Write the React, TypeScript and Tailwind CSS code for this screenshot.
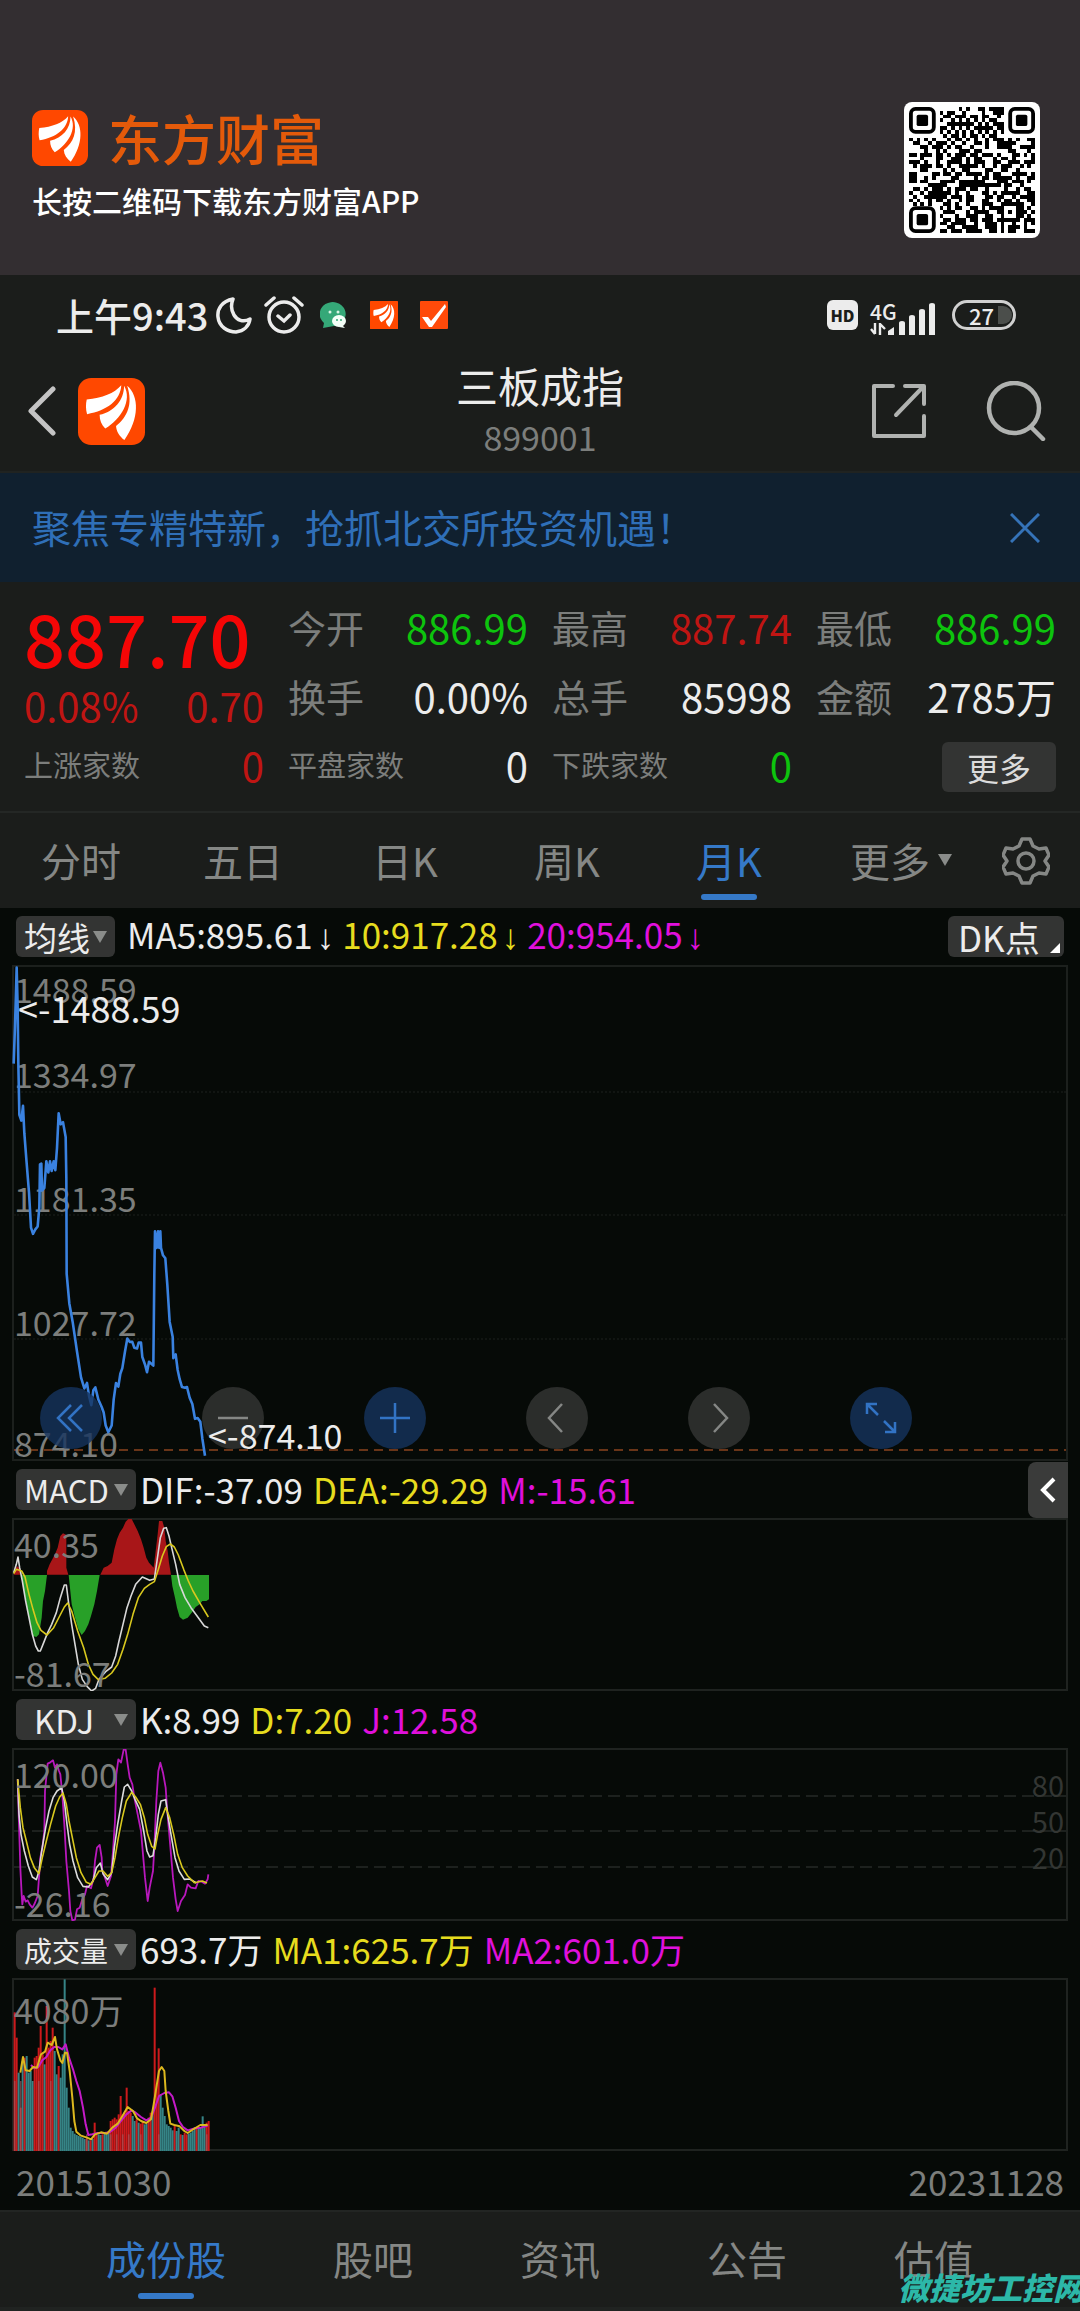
import React, { useState } from 'react';
import clsx from 'clsx';

const QR_ROWS = [
  '111111100000010100110111101111111',
  '100000101011001000010011101000001',
  '101110100110111011011001001011101',
  '101110101001010101010110001011101',
  '101110100011111110101011101011101',
  '100000101101010101111101101000001',
  '111111101010101010101010101111111',
  '000000000101101011010110000000000',
  '101010100010110101001011101010011',
  '011001011101001001101001111100001',
  '000110111010110010001001111001111',
  '000010010100011101100000001100010',
  '110111011010111011011101000110101',
  '000100011001110101100010110100001',
  '111010010011110101110011001110111',
  '010111011010011111010010111001010',
  '000110000101001100001100110010000',
  '110000110110110111101011000111101',
  '110010100001100001011011111010011',
  '110110001111011111110001110111010',
  '000001111100011111111111011001000',
  '011010111010111011001000010010110',
  '100101111110100100011010111110011',
  '010011111101110110001101100101111',
  '101001011010010110011001011010011',
  '010101000110100100011100111111001',
  '000000001010110011010111100011010',
  '111111100111000101111001101011101',
  '100000101000100111001100100011010',
  '101110100110111011011101111110111',
  '101110101101111001001110100100101',
  '101110100011001111001110101110100',
  '111111101101110111100110101100111',
];

const inFinder = (x: number, y: number) => (x < 7 && y < 7) || (x > 25 && y < 7) || (x < 7 && y > 25);

const QrCode: React.FC = () => (
  <svg viewBox="0 0 33 33" className="size-full" shapeRendering="crispEdges" role="img">
    {QR_ROWS.map((row, y) =>
      row.split('').map((bit, x) =>
        bit === '1' && !inFinder(x, y) ? <rect key={`${x}-${y}`} x={x} y={y} width="1" height="1" fill="#000" /> : null,
      ),
    )}
    {[
      [0, 0],
      [26, 0],
      [0, 26],
    ].map(([x, y]) => (
      <g key={`${x}-${y}`} shapeRendering="auto">
        <rect x={x + 0.5} y={y + 0.5} width="6" height="6" rx="1.2" fill="none" stroke="#000" />
        <rect x={x + 2} y={y + 2} width="3" height="3" rx="0.5" fill="#000" />
      </g>
    ))}
  </svg>
);

const Logo: React.FC<{ className?: string; square?: boolean }> = ({ className, square }) => (
  <svg viewBox="0 0 192 200" preserveAspectRatio="none" className={className}>
    <rect width="192" height="200" rx={square ? 4 : 38} fill="#ff4800" />
    <path fill="#fff" d="M25 64C70 60 104 46 124 22C122 66 84 98 26 108C22 94 22 78 25 64Z" />
    <path fill="#fff" d="M62 110C104 100 132 66 132 23C156 66 124 122 78 151C67 140 62 126 62 110Z" />
    <path fill="#fff" d="M141 23C176 54 176 122 133 185C119 174 110 160 109 143C142 116 158 78 141 23Z" />
  </svg>
);

const Caret: React.FC<{ className?: string }> = ({ className }) => (
  <svg viewBox="0 0 14 12" className={clsx('h-3 w-3.5', className)}>
    <path d="M0 0H14L7 12Z" fill="#8a8c8a" />
  </svg>
);

const DownloadHeader: React.FC = () => (
  <header className="flex h-[275px] items-center justify-between bg-[#332e31] pr-10 pl-8">
    <div className="pt-14">
      <div className="flex items-center gap-5">
        <Logo className="size-14" />
        <h1 className="text-[54px] leading-[56px] font-medium text-[#e45a0a]">东方财富</h1>
      </div>
      <p className="mt-3 text-[30px] leading-[44px] font-medium text-white">长按二维码下载东方财富APP</p>
    </div>
    <div className="mt-16 size-[136px] rounded-lg bg-white p-[5px]">
      <QrCode />
    </div>
  </header>
);

const StatusBar: React.FC = () => (
  <div className="flex h-20 items-center pr-16 pl-14 text-[#ececec]">
    <span className="text-[38px] leading-[40px] font-medium">上午9:43</span>
    <svg viewBox="0 0 36 38" className="ml-2 h-[38px] w-9" fill="none" stroke="currentColor" strokeWidth="3.5" strokeLinejoin="round">
      <path d="M17 3C6 5 1 13 2 21C3 31 12 36 20 36C28 35 33 30 34 23C27 27 21 24 18 19C15 14 15 8 17 3Z" />
    </svg>
    <svg viewBox="0 0 40 38" className="ml-3 h-[38px] w-10" fill="none" stroke="currentColor" strokeWidth="3.5" strokeLinecap="round">
      <circle cx="20" cy="21" r="15" />
      <path d="M2 9L10 2M38 9L30 2M14 20L20 25L26 19" />
    </svg>
    <svg viewBox="0 0 28 28" className="ml-4 size-7">
      <path d="M3 27L4 22A13 12 0 1 1 14 25Z" fill="#35a878" />
      <circle cx="10" cy="11" r="1.5" fill="#d9f5e6" />
      <circle cx="18" cy="11" r="1.5" fill="#d9f5e6" />
      <ellipse cx="19" cy="20" rx="7" ry="6" fill="#f4fff8" />
      <path d="M22 24L25 27L19 26Z" fill="#f4fff8" />
      <circle cx="17" cy="19" r="1" fill="#35a878" />
      <circle cx="21" cy="19" r="1" fill="#35a878" />
    </svg>
    <Logo square className="ml-[22px] size-7" />
    <svg viewBox="0 0 28 28" className="ml-[22px] size-7">
      <rect width="28" height="28" rx="1" fill="#ff4a0a" />
      <path d="M2 16L8 16L11 20L25 3L26 6L12 26L9 26Z" fill="#fff" />
    </svg>
    <span className="ml-auto flex h-[30px] w-[31px] items-center justify-center rounded-md bg-[#ececec] text-[16px] leading-none font-black text-[#1b1d1b]">
      HD
    </span>
    <div className="mr-4 ml-3 grid h-10 w-[66px] grid-cols-[18px_48px] items-end">
      <div className="flex flex-col">
        <span className="text-[21px] leading-[24px] font-medium">4G</span>
        <svg viewBox="0 0 16 12" className="h-3 w-4" fill="none" stroke="currentColor" strokeWidth="2.4">
          <path d="M5 0V11M1 6L5 11M10 12V1L15 6" />
        </svg>
      </div>
      <svg viewBox="0 0 48 32" className="h-8 w-12" fill="currentColor">
        <path d="M0 32V28L6 24V32ZM11 32V20Q11 18 14 18Q17 18 17 20V32ZM21 32V14Q21 12 24 12Q27 12 27 14V32ZM31 32V8Q31 6 34 6Q37 6 37 8V32ZM41 32V2Q41 0 44 0Q47 0 47 2V32Z" />
      </svg>
    </div>
    <div className="flex h-[30px] w-16 items-center overflow-hidden rounded-full border-[3px] border-[#d0d0d0]">
      <span className="ml-3.5 text-[22px] leading-[24px] font-medium">27</span>
      <span className="ml-1 h-[18px] w-3.5 rounded-r-full bg-[#4b4e4b]" />
    </div>
  </div>
);

const AppBar: React.FC = () => (
  <div className="grid h-[118px] grid-cols-3 items-center border-b-2 border-[#202321] px-7 pb-1">
    <div className="flex items-center gap-[22px]">
      <button aria-label="返回">
        <svg viewBox="0 0 28 50" className="h-[50px] w-7" fill="none" stroke="#c4c4c4" strokeWidth="5" strokeLinecap="round" strokeLinejoin="round">
          <path d="M25 3L3 25L25 47" />
        </svg>
      </button>
      <Logo className="h-[67px] w-[67px]" />
    </div>
    <div className="pb-1 text-center">
      <h2 className="text-[42px] leading-[56px] text-[#ececec]">三板成指</h2>
      <p className="text-[34px] leading-[48px] text-[#7c7e7c]">899001</p>
    </div>
    <div className="flex items-center justify-end gap-[60px] pr-1.5">
      <button aria-label="分享">
        <svg viewBox="0 0 54 54" className="size-[54px]" fill="none" stroke="#b0b2b0" strokeWidth="4" strokeLinecap="round" strokeLinejoin="round">
          <path d="M21 2H2V52H52V32M33 2H52V20M50 4L24 31" />
        </svg>
      </button>
      <button aria-label="搜索">
        <svg viewBox="0 0 60 60" className="size-[60px]" fill="none" stroke="#b0b2b0" strokeWidth="4.5" strokeLinecap="round">
          <circle cx="28" cy="27" r="25" />
          <path d="M45 46L57 58" />
        </svg>
      </button>
    </div>
  </div>
);

const Banner: React.FC<{ onClose: () => void }> = ({ onClose }) => (
  <div className="flex h-[109px] items-center justify-between bg-[#10202f] px-8">
    <a href="#topic" className="pb-1 text-[39px] leading-[56px] text-[#2f6fb8]">
      聚焦专精特新，抢抓北交所投资机遇！
    </a>
    <button aria-label="关闭" onClick={onClose} className="mr-2">
      <svg viewBox="0 0 30 30" className="size-[30px]" fill="none" stroke="#3573b8" strokeWidth="3">
        <path d="M1 1L29 29M29 1L1 29" />
      </svg>
    </button>
  </div>
);

interface StatProps {
  label: string;
  value: string;
  color: string;
  small?: boolean;
}

const Stat: React.FC<StatProps> = ({ label, value, color, small }) => (
  <div className="flex items-center justify-between pb-1 whitespace-nowrap">
    <span className={clsx('text-[#7c7e7c]', small ? 'text-[29px]' : 'text-[38px]')}>{label}</span>
    <span className={clsx('text-[40px]', color)}>{value}</span>
  </div>
);

const QuotePanel: React.FC = () => (
  <section className="grid h-[231px] grid-cols-4 grid-rows-[69px_69px_69px] gap-x-6 border-b-2 border-[#242725] px-6 pt-3">
    <div className="row-span-2 flex flex-col">
      <span className="text-[72px] leading-[86px] font-medium text-[#f50606]">887.70</span>
      <span className="flex justify-between text-[40px] leading-[50px] text-[#c01513]">
        <span>0.08%</span>
        <span>0.70</span>
      </span>
    </div>
    <Stat label="今开" value="886.99" color="text-[#0dc40d]" />
    <Stat label="最高" value="887.74" color="text-[#c01513]" />
    <Stat label="最低" value="886.99" color="text-[#0dc40d]" />
    <Stat label="换手" value="0.00%" color="text-[#ececec]" />
    <Stat label="总手" value="85998" color="text-[#ececec]" />
    <Stat label="金额" value="2785万" color="text-[#ececec]" />
    <Stat small label="上涨家数" value="0" color="text-[#c01513]" />
    <Stat small label="平盘家数" value="0" color="text-[#ececec]" />
    <Stat small label="下跌家数" value="0" color="text-[#0dc40d]" />
    <button className="h-[50px] w-[114px] self-center justify-self-end rounded-md bg-[#333433] text-[32px] leading-[48px] text-[#dcdcdc]">
      更多
    </button>
  </section>
);

const PERIODS = ['分时', '五日', '日K', '周K', '月K', '更多'];

const PeriodTabs: React.FC = () => {
  const [active, setActive] = useState('月K');
  return (
    <nav className="grid h-[95px] grid-cols-[repeat(6,3fr)_2fr]">
      {PERIODS.map((p) => (
        <button
          key={p}
          onClick={() => setActive(p)}
          className={clsx(
            'relative flex items-center justify-center gap-2 pb-0.5 text-[40px]',
            p === active ? 'text-[#3579c8]' : 'text-[#858785]',
            p === '更多' && 'pl-5',
          )}
        >
          {p}
          {p === '更多' && <Caret />}
          {p === active && <span className="absolute bottom-2 h-1.5 w-14 rounded-sm bg-[#3579c8]" />}
        </button>
      ))}
      <button aria-label="设置" className="flex items-center justify-center">
        <svg viewBox="0 0 48 50" className="h-[50px] w-12" fill="none" stroke="#858785" strokeWidth="3.5" strokeLinejoin="round">
          <path d="M20 3H28L31 10L37 13L44 12L47 19L43 25L47 31L44 38L37 37L31 40L28 47H20L17 40L11 37L4 38L1 31L5 25L1 19L4 12L11 13L17 10Z" />
          <circle cx="24" cy="25" r="8" />
        </svg>
      </button>
    </nav>
  );
};

const Picker: React.FC<{ label: string; options: string[]; className: string }> = ({ label, options, className }) => (
  <span className="relative flex items-center">
    <select
      aria-label={label}
      defaultValue={options[0]}
      className={clsx('h-[41px] appearance-none rounded-md bg-[#333433] leading-[40px] text-[#ececec] outline-none', className)}
    >
      {options.map((o) => (
        <option key={o}>{o}</option>
      ))}
    </select>
    <Caret className="pointer-events-none absolute right-2" />
  </span>
);

interface IndicatorRowProps {
  picker: React.ReactNode;
  values: string[];
  falling?: boolean;
  children?: React.ReactNode;
}

const IndicatorRow: React.FC<IndicatorRowProps> = ({ picker, values, falling, children }) => (
  <div className="flex h-[57px] items-center pl-4 text-[35px] leading-[40px] whitespace-nowrap">
    {picker}
    <span className={clsx('flex pb-0.5', falling ? 'ml-3 gap-2' : 'ml-1 gap-2.5')}>
      {values.map((v, i) => (
        <span key={v} className={['text-[#ececec]', 'text-[#e6dc1e]', 'text-[#e010dc]'][i]}>
          {v}
          {falling && <span className="ml-1 font-['Liberation_Sans']">↓</span>}
        </span>
      ))}
    </span>
    {children}
  </div>
);

const Line: React.FC<{ points: string; color: string; width?: number }> = ({ points, color, width = 1.6 }) => (
  <polyline
    points={points}
    fill="none"
    stroke={color}
    strokeWidth={width}
    strokeLinejoin="round"
    vectorEffect="non-scaling-stroke"
  />
);

const PRICE_LINE =
  '38,332 42,230 47,72 50,180 52,330 55,470 61,486 66,446 70,520 76,590 84,680 90,775 96,792 103,780 110,772 115,720 117,604 121,602 123,675 130,668 136,596 142,626 147,596 152,622 158,596 163,620 168,560 173,466 179,496 186,490 194,530 196,640 197,900 205,980 215,1030 228,1110 240,1180 250,1210 258,1195 264,1230 271,1255 277,1215 283,1207 292,1240 302,1260 308,1275 314,1310 322,1328 332,1310 338,1240 345,1195 352,1205 358,1170 364,1155 372,1110 379,1075 386,1084 394,1084 400,1100 408,1102 413,1086 420,1086 424,1125 432,1145 438,1166 444,1138 457,1148 460,900 462,785 467,830 471,785 475,830 478,785 480,830 486,850 493,858 499,930 506,1030 515,1070 517,1128 524,1118 530,1160 536,1185 543,1206 552,1208 558,1206 566,1235 574,1252 582,1292 590,1290 598,1300 604,1345 612,1392';

const CircleButton: React.FC<{ label: string; blue?: boolean; d: string }> = ({ label, blue, d }) => (
  <button
    aria-label={label}
    className={clsx(
      'flex size-[62px] items-center justify-center rounded-full',
      blue ? 'bg-[#15335e]/80 text-[#3273c4]' : 'bg-[#343634]/80 text-[#858785]',
    )}
  >
    <svg viewBox="0 0 32 32" className="size-8" fill="none" stroke="currentColor" strokeWidth="2.5">
      <path d={d} />
    </svg>
  </button>
);

const PriceChart: React.FC = () => (
  <div className="relative mx-3 h-[496px] border-2 border-[#1c201d] text-[34px] leading-[40px] text-[#7c7e7c]">
    <div className="absolute inset-x-0 top-[124px] border-t-2 border-dotted border-[#111512]" />
    <div className="absolute inset-x-0 top-[247px] border-t-2 border-dotted border-[#111512]" />
    <div className="absolute inset-x-0 top-[371px] border-t-2 border-dotted border-[#111512]" />
    <svg className="absolute inset-x-0 bottom-2 h-0.5 w-full">
      <line x1="0" y1="1" x2="100%" y2="1" stroke="#6a3518" strokeWidth="2" strokeDasharray="9 6" />
    </svg>
    <span className="absolute top-0.5 left-0">1488.59</span>
    <span className="absolute top-[87px] left-0">1334.97</span>
    <span className="absolute top-[211px] left-0">1181.35</span>
    <span className="absolute top-[335px] left-0">1027.72</span>
    <span className="absolute -bottom-1 left-0">874.10</span>
    <svg viewBox="36 68 600 1338" preserveAspectRatio="none" className="absolute -top-px -left-px h-[495px] w-[200px] overflow-visible">
      <Line points={PRICE_LINE} color="#3a82e0" width={2.6} />
    </svg>
    <div className="absolute bottom-2.5 left-[26px] flex gap-[100px]">
      <CircleButton blue label="最左" d="M16 3L3 16L16 29M27 3L14 16L27 29" />
      <CircleButton label="缩小" d="M1 16H31" />
      <CircleButton blue label="放大" d="M1 16H31M16 1V31" />
      <CircleButton label="左移" d="M21 2L8 16L21 30" />
      <CircleButton label="右移" d="M11 2L24 16L11 30" />
      <CircleButton blue label="全屏" d="M2 12V2H12M2 2L13 13M30 20V30H20M30 30L19 19" />
    </div>
    <span className="absolute top-5 left-1 text-[36px] text-[#ececec]">&lt;-1488.59</span>
    <span className="absolute bottom-1 left-[194px] text-[#ececec]">&lt;-874.10</span>
  </div>
);

interface SubChartProps {
  high: string;
  low?: string;
  viewBox: string;
  children: React.ReactNode;
  grid?: React.ReactNode;
}

const SubChart: React.FC<SubChartProps> = ({ high, low, viewBox, children, grid }) => (
  <div className="relative mx-3 h-[173px] border-2 border-[#1f2320] text-[34px] leading-[40px] text-[#7c7e7c]">
    {grid}
    <svg viewBox={viewBox} className="absolute -top-px -left-px h-[172px] w-[200px]">
      {children}
    </svg>
    <span className={clsx('absolute left-0', low ? 'top-1' : 'top-2.5')}>{high}</span>
    {low && <span className="absolute -bottom-1 left-0">{low}</span>}
  </div>
);

const MacdChart: React.FC = () => (
  <SubChart high="40.35" low="-81.67" viewBox="36 54 600 516">
    <path
      fill="#a81618"
      d="M38 221L44 200L50 196L58 205V221ZM138 221V210L146 190L154 175L162 160L170 140L178 105L186 97L196 102V200L202 221ZM298 221L308 200L320 195L332 185L340 145L348 115L356 95L366 80L374 62L382 54H392L400 70L410 90L420 115L428 140L436 170L444 185L458 200L464 150L470 100L474 60H484L490 80L494 120L500 150L504 185L510 221Z"
    />
    <path
      fill="#28a028"
      d="M60 222H138L132 270L126 300L122 350L114 400L106 408L96 405L88 370L80 330L70 270ZM203 222H296L288 270L280 310L270 345L262 370L252 390L242 402L232 385L222 350L212 310ZM510 222H624V295L616 300H604L596 310L584 318L572 335L560 350L546 356L536 348L528 320L522 290L514 255Z"
    />
    <Line color="#d8d8d8" points="38,215 46,190 51,168 56,200 64,240 74,300 84,350 94,400 104,435 112,450 118,450 126,430 140,395 152,370 166,335 178,290 190,252 196,252 202,300 212,370 222,430 232,490 244,535 258,556 272,570 284,562 294,535 314,512 332,498 344,465 354,420 366,370 378,320 390,285 404,250 424,228 446,238 460,234 468,180 478,110 488,82 496,80 504,105 512,140 524,190 536,250 552,290 570,320 592,350 610,375 622,380" />
    <Line color="#d8c81e" points="38,218 46,205 62,210 72,228 84,280 96,325 108,365 120,388 138,402 158,380 176,345 190,318 200,306 212,330 230,390 248,440 262,490 276,520 292,536 312,532 332,516 350,490 366,445 380,400 396,340 412,290 430,262 446,250 460,242 472,205 484,165 496,137 508,129 520,138 532,162 548,205 562,240 576,270 596,305 622,348" />
  </SubChart>
);

const KdjChart: React.FC = () => (
  <SubChart
    high="120.00"
    low="-26.16"
    viewBox="36 174 600 516"
    grid={
      <>
        <svg className="absolute inset-0 size-full" stroke="#1d211e" strokeWidth="2" strokeDasharray="12 6">
          <line x1="0" y1="46" x2="100%" y2="46" />
          <line x1="0" y1="81" x2="100%" y2="81" />
          <line x1="0" y1="117" x2="100%" y2="117" />
        </svg>
        <div className="absolute top-4 right-0.5 flex flex-col text-[29px] leading-[36px] text-[#333633]">
          <span>80</span>
          <span>50</span>
          <span>20</span>
        </div>
      </>
    }
  >
    <Line color="#b818bc" width={1.8} points="50,265 54,400 58,530 62,610 64,640 68,615 74,632 80,628 86,640 94,650 100,640 110,615 114,560 118,500 124,470 130,420 132,300 140,218 148,214 156,208 162,230 168,220 174,240 178,250 184,310 190,400 196,510 204,600 208,660 214,688 222,686 228,655 236,650 244,625 252,610 258,585 270,592 278,560 282,510 288,470 296,462 302,500 304,540 312,560 320,585 330,555 336,480 342,390 346,250 352,205 360,215 368,176 374,176 380,220 386,260 394,280 400,320 410,370 420,420 426,490 432,560 440,630 446,590 456,540 460,470 466,330 472,240 478,215 486,245 494,290 498,350 504,420 510,490 516,560 524,625 530,660 540,630 552,612 560,580 570,590 584,592 592,570 602,572 612,578 620,565 622,550" />
    <Line color="#dcdcdc" points="50,265 54,370 60,430 70,480 82,525 94,558 106,566 114,540 122,480 134,410 144,360 156,320 168,300 182,290 190,330 198,400 206,460 216,510 230,560 246,586 262,588 276,570 286,530 298,516 306,548 320,566 332,545 340,470 350,400 362,330 370,288 380,280 392,300 402,325 416,355 428,420 438,480 446,498 456,494 464,440 472,370 480,330 494,326 500,370 510,430 522,500 534,540 550,565 566,564 586,576" />
    <Line color="#d8c81e" points="50,265 58,350 66,410 76,450 88,500 100,530 114,548 124,500 136,450 150,395 164,345 176,318 186,306 196,340 204,390 214,440 226,500 240,545 256,574 270,580 282,560 294,540 306,540 320,556 332,545 342,500 352,440 364,380 376,330 392,304 404,318 418,340 430,380 440,430 452,466 462,474 470,430 480,385 494,350 506,380 518,430 530,490 544,530 560,555 580,575 604,570 618,576" />
  </SubChart>
);

// Bar heights of the volume pane, one per month; r = up, g = down
const VOLUME =
  'r416 r340 g235 r130 g270 r280 g285 g235 g240 g210 r280 r285 r310 r375 r290 g260 r435 r310 r330 r370 g300 g230 r255 g220 g290 g515 g190 g130 g70 g60 g52 g48 g45 g42 g40 g36 r36 g32 r32 g36 r85 r50 g50 g48 r50 g52 g50 g55 r90 r95 r100 r95 r110 r165 r110 r115 r190 r120 r115 g105 g90 r95 g85 r82 r90 g80 g82 r100 r115 g120 r490 r200 r308 g170 g130 g105 g80 g75 g70 g62 r75 g60 g70 r50 g48 r55 r50 g52 g55 g60 g70 r68 g68 g70 g104 g75 r85 r90'
    .split(' ')
    .map((v) => ({ up: v[0] === 'r', h: Number(v.slice(1)) }));

const VolumeChart: React.FC = () => (
  <SubChart high="4080万" viewBox="36 174 600 516">
    {VOLUME.map(({ up, h }, i) => (
      <rect key={i} x={38 + i * 6} y={690 - h} width="6" height={h} fill={up ? '#cc1a1c' : '#368486'} />
    ))}
    {VOLUME.map(({ up }, i) =>
      up && i % 3 === 0 ? <rect key={i} x={40 + i * 6} y={i < 30 ? 480 : 640} width="3" height="210" fill="#a05a5e" /> : null,
    )}
    <Line color="#c41ac8" width={2} points="90,432 100,442 112,438 124,418 136,408 148,388 160,378 172,378 184,385 194,370 204,410 216,445 226,480 236,510 246,560 254,610 262,642 274,640 290,636 310,636 326,634 344,620 360,600 376,580 392,568 404,575 420,588 436,598 450,590 462,560 474,525 490,516 504,514 514,526 524,560 534,600 546,618 560,628 580,622 600,620 620,614" />
    <Line color="#dcb81e" width={2} points="58,455 66,408 74,448 86,450 96,438 108,440 120,400 132,392 140,365 152,372 162,348 168,385 178,418 184,426 192,395 198,395 206,450 214,530 220,600 226,632 240,644 258,650 270,655 282,640 300,634 318,638 334,620 350,608 366,582 380,558 396,570 408,592 420,600 436,606 450,595 458,550 466,500 474,450 482,438 490,450 494,510 502,570 508,608 520,612 536,616 550,630 560,636 578,624 598,612 620,612" />
  </SubChart>
);

const SECTIONS = ['成份股', '股吧', '资讯', '公告', '估值'];

const BottomNav: React.FC = () => (
  <nav className="relative flex h-[101px] gap-[107px] overflow-hidden border-t-2 border-b-4 border-t-[#222523] border-b-[#202321] bg-[#1b1d1b] pl-[106px] text-[40px] leading-[92px] whitespace-nowrap">
    {SECTIONS.map((s, i) => (
      <a key={s} href={`#s${i}`} className={clsx('relative flex justify-center', i === 0 ? 'text-[#3579c8]' : 'text-[#858785]')}>
        {s}
        {i === 0 && <span className="absolute bottom-2 h-1.5 w-14 rounded-sm bg-[#3579c8]" />}
      </a>
    ))}
    <span className="absolute bottom-0.5 left-[898px] text-[31px] leading-[36px] font-black text-[#2cb8a8] italic">微捷坊工控网</span>
  </nav>
);

export default function App() {
  const [bannerOpen, setBannerOpen] = useState(true);

  return (
    <div className="w-full overflow-hidden bg-[#1b1d1b] font-['Noto_Sans_CJK_SC',sans-serif]">
      <DownloadHeader />
      <StatusBar />
      <AppBar />
      {bannerOpen && <Banner onClose={() => setBannerOpen(false)} />}
      <QuotePanel />
      <PeriodTabs />
      <main className="bg-[#060a07]">
        <IndicatorRow
          falling
          picker={<Picker label="主图指标" options={['均线']} className="w-[99px] pl-2 text-[33px]" />}
          values={['MA5:895.61', '10:917.28', '20:954.05']}
        >
          <button className="relative mr-4 ml-auto h-[41px] w-[116px] rounded-md bg-[#333433] pl-2.5 text-left text-[35px] leading-[38px] text-[#ececec]">
            DK点
            <svg viewBox="0 0 10 10" className="absolute right-1 bottom-1 size-2.5">
              <path d="M10 0V10H0Z" fill="#fff" />
            </svg>
          </button>
        </IndicatorRow>
        <PriceChart />
        <IndicatorRow
          picker={<Picker label="副图一" options={['MACD']} className="w-[120px] pl-2 text-[31px]" />}
          values={['DIF:-37.09', 'DEA:-29.29', 'M:-15.61']}
        >
          <button aria-label="展开" className="mr-3 ml-auto flex h-[56px] w-10 items-center justify-center rounded-l-lg bg-[#3a3b3a]">
            <svg viewBox="0 0 16 26" className="h-[26px] w-4" fill="none" stroke="#fff" strokeWidth="4">
              <path d="M14 2L3 13L14 24" />
            </svg>
          </button>
        </IndicatorRow>
        <MacdChart />
        <IndicatorRow
          picker={<Picker label="副图二" options={['KDJ']} className="w-[120px] pl-[18px] text-[33px]" />}
          values={['K:8.99', 'D:7.20', 'J:12.58']}
        />
        <KdjChart />
        <IndicatorRow
          picker={<Picker label="副图三" options={['成交量']} className="w-[120px] pl-2 text-[28px]" />}
          values={['693.7万', 'MA1:625.7万', 'MA2:601.0万']}
        />
        <VolumeChart />
        <div className="flex h-[59px] items-center justify-between px-4 text-[35px] leading-[40px] text-[#7c7e7c]">
          <time>20151030</time>
          <time>20231128</time>
        </div>
      </main>
      <BottomNav />
    </div>
  );
}
